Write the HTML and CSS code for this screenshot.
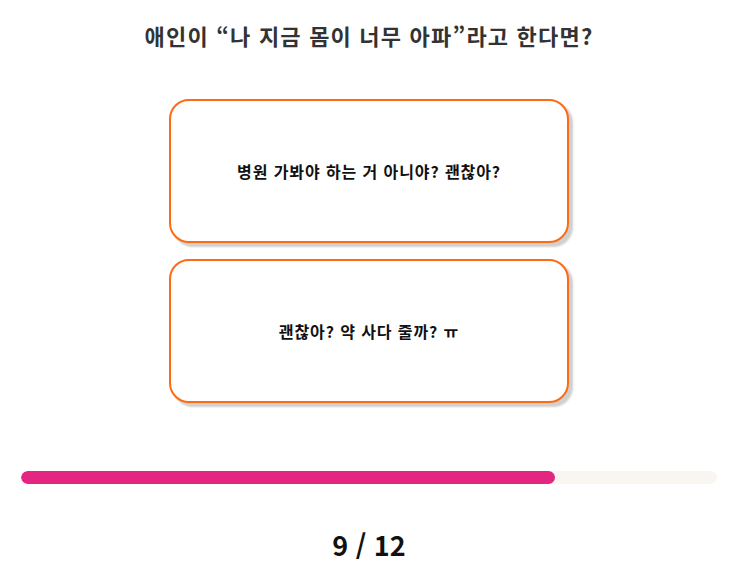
FILE: index.html
```html
<!DOCTYPE html>
<html lang="ko">
<head>
    <meta charset="UTF-8">
    <meta name="viewport" content="width=device-width, initial-scale=1.0">
    <title>Quiz</title>
    <link rel="stylesheet" href="styles.css">
</head>
<body>
    <main class="quiz">
        <h1 class="question">애인이 “나 지금 몸이 너무 아파”라고 한다면?</h1>

        <div class="answers">
            <button class="answer">병원 가봐야 하는 거 아니야? 괜찮아?</button>
            <button class="answer">괜찮아? 약 사다 줄까? ㅠ</button>
        </div>

        <div class="progress">
            <div class="progress-fill" style="width: 76.7%;"></div>
        </div>

        <p class="counter">9 / 12</p>
    </main>
</body>
</html>
```

FILE: styles.css
```css
body {
    font-family: "Noto Sans CJK KR", "Noto Sans", sans-serif;
    background-color: #fff;
    margin: 0;
    padding: 0;
}
.quiz {
    padding: 0 15px 0 21px;
}
.question {
    margin: 0;
    padding-top: 19px;
    font-size: 22px;
    line-height: 32px;
    letter-spacing: 1.2px;
    font-weight: bold;
    color: #333;
    text-align: center;
}
.answers {
    display: flex;
    flex-direction: column;
    align-items: center;
    gap: 16px;
    margin-top: 48px;
}
.answer {
    width: 400px;
    height: 144px;
    background-color: #fff;
    border: 2px solid #ff6a13;
    border-radius: 20px;
    box-shadow: 4px 4px 2px #d0d0d0;
    font-family: inherit;
    font-size: 16px;
    letter-spacing: 0.9px;
    font-weight: bold;
    color: #111;
    cursor: pointer;
}
.progress {
    height: 13px;
    margin-top: 68px;
    background-color: #f9f6f2;
    border-radius: 7px;
    overflow: hidden;
}
.progress-fill {
    height: 100%;
    background-color: #e52582;
    border-radius: 7px;
}
.counter {
    margin: 43px 0 0;
    font-size: 27px;
    line-height: 36px;
    font-weight: bold;
    color: #111;
    text-align: center;
}
```
